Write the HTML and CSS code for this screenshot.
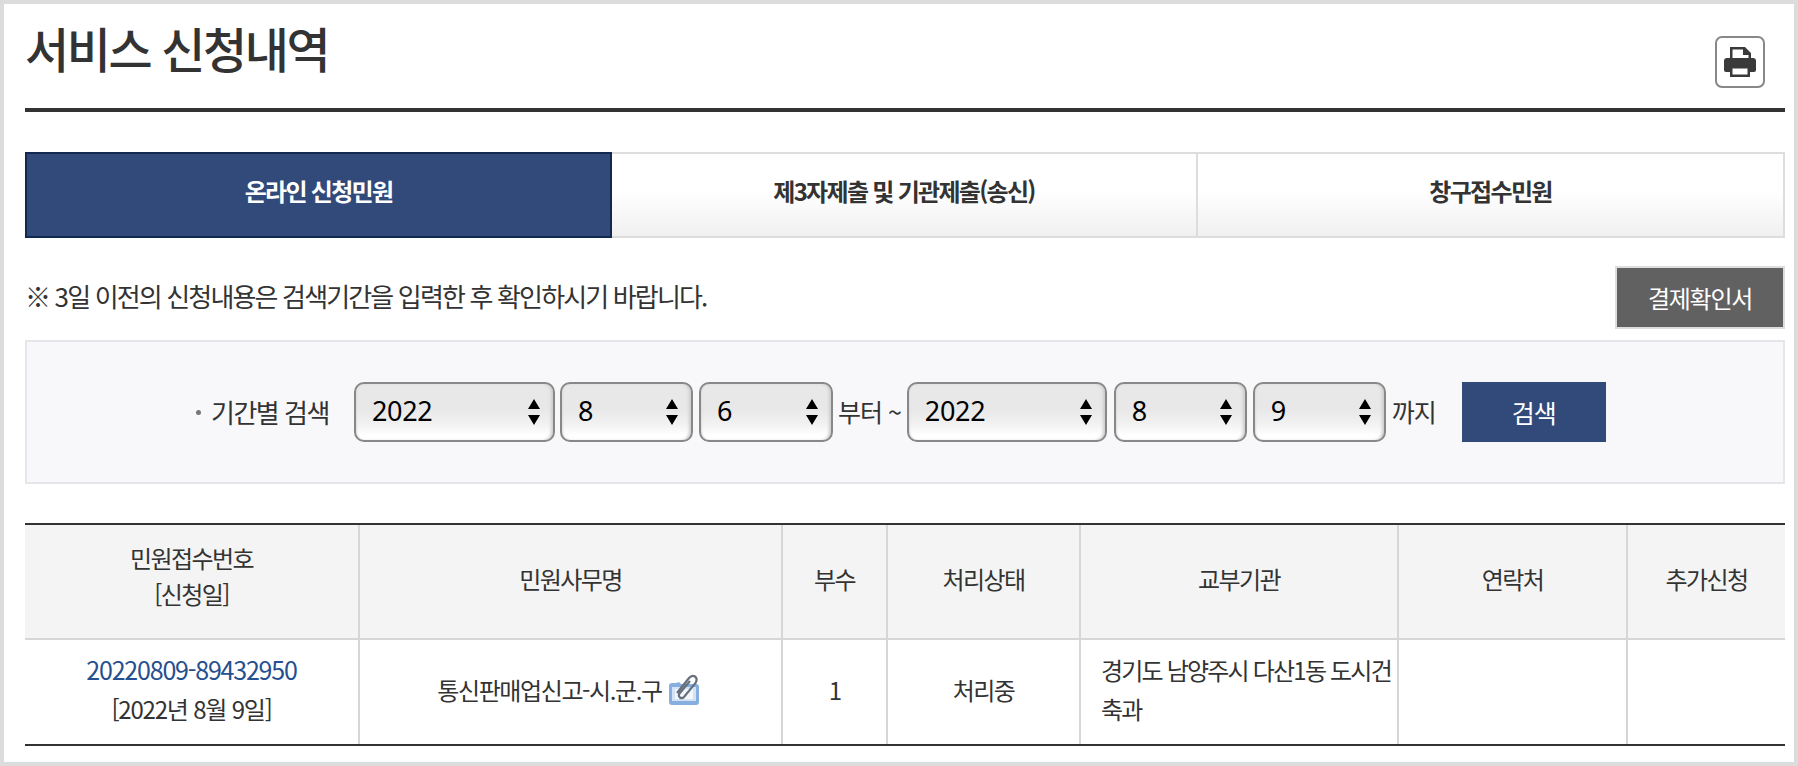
FILE: index.html
```html
<!DOCTYPE html>
<html lang="ko">
<head>
<meta charset="utf-8">
<title>서비스 신청내역</title>
<link rel="stylesheet" href="styles.css">
</head>
<body>
<main class="page">
  <header class="head">
    <h1 class="title">서비스 신청내역</h1>
    <button class="print" type="button" aria-label="인쇄">
      <svg width="34" height="32" viewBox="0 0 34 32"><path class="ink" d="M7 1h15l6 6v6h-2.500V9H20V3.500H9.500V13H7z"/><path class="ink" d="M4 12h26a3 3 0 0 1 3 3v9a2 2 0 0 1-2 2h-4v-6H7v6H3a2 2 0 0 1-2-2v-9a3 3 0 0 1 3-3z"/><path class="ink" d="M7 20h20v11H7zM9.500 22.500v6h15v-6z" fill-rule="evenodd"/></svg>
    </button>
  </header>

  <nav class="tabs">
    <a class="tab active">온라인 신청민원</a>
    <a class="tab">제3자제출 및 기관제출(송신)</a>
    <a class="tab">창구접수민원</a>
  </nav>

  <div class="notice">
    <p class="notice-text">※ 3일 이전의 신청내용은 검색기간을 입력한 후 확인하시기 바랍니다.</p>
    <button class="confirm" type="button">결제확인서</button>
  </div>

  <form class="search">
    <span class="dot"></span>
    <span class="label">기간별 검색</span>
    <select class="sel sel-y first"><option>2022</option></select>
    <select class="sel sel-a"><option>8</option></select>
    <select class="sel sel-b"><option>6</option></select>
    <span class="txt from">부터 ~</span>
    <select class="sel sel-y"><option>2022</option></select>
    <select class="sel sel-a"><option>8</option></select>
    <select class="sel sel-a"><option>9</option></select>
    <span class="txt">까지</span>
    <button class="go" type="button">검색</button>
  </form>

  <table class="list">
    <colgroup>
      <col class="c1"><col class="c2"><col class="c3"><col class="c4"><col class="c5"><col class="c6"><col class="c7">
    </colgroup>
    <thead>
      <tr>
        <th class="two">민원접수번호<br>[신청일]</th>
        <th>민원사무명</th>
        <th>부수</th>
        <th>처리상태</th>
        <th>교부기관</th>
        <th>연락처</th>
        <th>추가신청</th>
      </tr>
    </thead>
    <tbody>
      <tr>
        <td><a class="num">20220809-89432950</a><br><span class="date">[2022년 8월 9일]</span></td>
        <td><span class="svc">통신판매업신고-시.군.구
          <svg class="clip" width="32" height="31" viewBox="0 0 32 31"><path d="M1 12q0-3 3-3h4l3-1 2 2h15q3 0 3 3v15q0 3-3 3H4q-3 0-3-3z" fill="#86aede"/><path d="M4 13h24v14H4z" fill="#d3e2f5"/><path d="M7 15h18v10H7z" fill="#f3f7fc"/><path d="M9 19 21 4q3-3.500 6-1.500t.5 6.500L16 23q-2 2-4 .5t-.5-4L22 7" fill="none" stroke="#66707c" stroke-width="2.200"/></svg></span></td>
        <td>1</td>
        <td>처리중</td>
        <td class="left">경기도 남양주시 다산1동 도시건축과</td>
        <td></td>
        <td></td>
      </tr>
    </tbody>
  </table>
</main>
</body>
</html>
```

FILE: styles.css
```css
* { box-sizing: border-box; }
html, body { margin: 0; height: 100%; }
body {
  background: #dcdcdc;
  padding: 4px;
  font-family: "Noto Sans CJK KR", "Noto Sans", sans-serif;
  color: #333;
  overflow: hidden;
}
.page {
  background: #fff;
  height: 758px;
  padding: 0 9px 0 21px;
}
.head {
  display: flex;
  justify-content: space-between;
  align-items: flex-start;
  height: 108px;
  border-bottom: 4px solid #333;
}
.title {
  margin: 0;
  padding-top: 15px;
  font-size: 48px;
  line-height: 56px;
  font-weight: 500;
  letter-spacing: -2.4px;
  color: #333;
}
.print {
  width: 50px;
  height: 52px;
  margin: 32px 20px 0 0;
  padding: 0;
  display: flex;
  align-items: center;
  justify-content: center;
  background: #fff;
  border: 2px solid #888;
  border-radius: 7px;
}
.ink { fill: #3a3a3a; }
.tabs {
  display: grid;
  grid-template-columns: 587px 586px 587px;
  margin-top: 40px;
  height: 86px;
}
.tab {
  display: flex;
  align-items: center;
  justify-content: center;
  padding-bottom: 9px;
  font-size: 24px;
  font-weight: 700;
  letter-spacing: -1.7px;
  color: #333;
  border: 2px solid #ddd;
  border-left-width: 0;
  background: linear-gradient(#fff 45%, #f0f0f0);
}
.tab.active {
  background: #314a7a;
  border: 2px solid #12284e;
  color: #fff;
}
.notice {
  display: flex;
  justify-content: space-between;
  align-items: center;
  margin-top: 28px;
  height: 63px;
}
.notice-text {
  margin: 0 0 5px;
  font-size: 26px;
  letter-spacing: -1.85px;
  color: #333;
}
.confirm {
  width: 170px;
  height: 63px;
  padding: 0;
  background: #616161;
  border: 2px solid #ddd;
  color: #fff;
  font: inherit;
  font-size: 24px;
  letter-spacing: -1.3px;
}
.search {
  display: flex;
  align-items: center;
  height: 144px;
  margin-top: 11px;
  padding-left: 169px;
  background: #f8f8fa;
  border: 2px solid #e6e6ea;
}
.dot {
  width: 5px;
  height: 5px;
  border-radius: 50%;
  background: #777;
  margin-right: 10px;
}
.label {
  font-size: 26px;
  letter-spacing: -1.5px;
  margin-right: 25px;
  padding-bottom: 2px;
}
.sel {
  appearance: none;
  -webkit-appearance: none;
  height: 60px;
  margin-right: 6px;
  padding: 0 0 3px 16px;
  border: 2px solid #888;
  border-radius: 10px;
  font-family: "Noto Sans", sans-serif;
  font-size: 27px;
  letter-spacing: -0.3px;
  color: #000;
  background-color: #e9e9e9;
  background-image:
    url("data:image/svg+xml,%3Csvg xmlns='http://www.w3.org/2000/svg' width='14' height='26'%3E%3Cpath d='M7 0l6 10H1zM7 26l-6-10h12z'/%3E%3C/svg%3E"),
    linear-gradient(#e8e8e8 45%, #f2f2f2 72%, #fff 92%);
  background-repeat: no-repeat;
  background-position: right 12px center, 0 0;
  box-shadow: inset -3px 0 3px -1px #ccc, inset 2px 0 2px -1px #ddd;
}
.sel-y { width: 200px; }
.sel-y.first { width: 201px; margin-right: 5px; }
.sel-a { width: 133px; }
.sel-b { width: 134px; margin-right: 0; }
.txt { font-size: 25px; letter-spacing: -1px; white-space: nowrap; padding-bottom: 2px; }
.from { margin-left: 5px; }
.sel-y:not(.first) { margin-left: 6px; margin-right: 7px; }
.go {
  width: 144px;
  height: 60px;
  margin-left: 26px;
  padding: 0;
  background: #314a7a;
  border: 0;
  color: #fff;
  font: inherit;
  font-size: 25px;
  letter-spacing: -1px;
}
.list {
  width: 1760px;
  margin-top: 39px;
  border-collapse: separate;
  border-spacing: 0;
  table-layout: fixed;
  border-top: 2px solid #333;
  border-bottom: 2px solid #333;
  font-size: 24px;
  letter-spacing: -1.6px;
  line-height: 39px;
}
.c1 { width: 333px; }
.c2 { width: 423px; }
.c3 { width: 105px; }
.c4 { width: 193px; }
.c5 { width: 318px; }
.c6 { width: 229px; }
.c7 { width: 159px; }
.list th, .list td {
  border-left: 2px solid #d6d6d6;
  text-align: center;
  padding: 0 0 8px;
  color: #333;
  font-weight: 400;
}
.list th:first-child, .list td:first-child { border-left: 0; }
.list th {
  height: 115px;
  line-height: 36px;
  padding-bottom: 5px;
  background: #f4f4f4;
  border-bottom: 2px solid #d6d6d6;
}
.list th.two { padding-bottom: 11px; }
.list td { height: 104px; padding-bottom: 6px; }
.list td.left { text-align: left; padding-left: 20px; letter-spacing: -1.8px; }
.num { color: #264f8f; font-size: 25px; letter-spacing: -1.2px; }
.date { letter-spacing: -1.2px; }
.svc { display: inline-flex; align-items: center; gap: 6px; padding-right: 4px; letter-spacing: -1.4px; }
.clip { flex: none; }
```
